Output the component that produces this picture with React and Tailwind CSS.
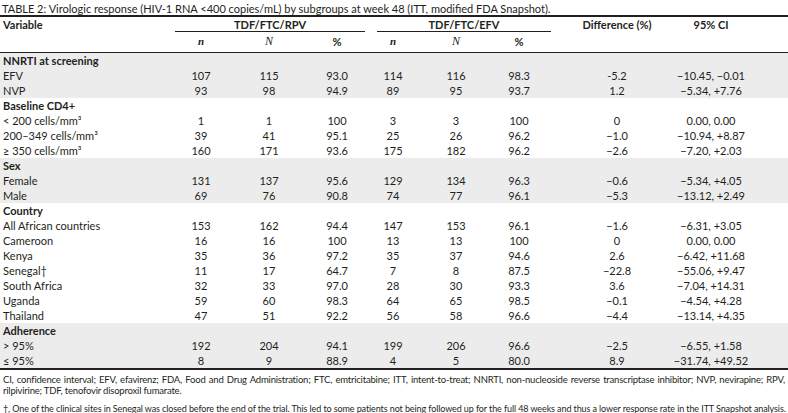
const cols = 'grid grid-cols-[168px_66px_70px_66px_46px_80px_46px_150px_38px_1fr]';

const groups = [
  {
    title: 'NNRTI at screening',
    shade: true,
    rows: [
      ['EFV', '107', '115', '93.0', '114', '116', '98.3', '-5.2', '−10.45, −0.01'],
      ['NVP', '93', '98', '94.9', '89', '95', '93.7', '1.2', '−5.34, +7.76'],
    ],
  },
  {
    title: 'Baseline CD4+',
    shade: false,
    rows: [
      ['< 200 cells/mm³', '1', '1', '100', '3', '3', '100', '0', '0.00, 0.00'],
      ['200–349 cells/mm³', '39', '41', '95.1', '25', '26', '96.2', '−1.0', '−10.94, +8.87'],
      ['≥ 350 cells/mm³', '160', '171', '93.6', '175', '182', '96.2', '−2.6', '−7.20, +2.03'],
    ],
  },
  {
    title: 'Sex',
    shade: true,
    rows: [
      ['Female', '131', '137', '95.6', '129', '134', '96.3', '−0.6', '−5.34, +4.05'],
      ['Male', '69', '76', '90.8', '74', '77', '96.1', '−5.3', '−13.12, +2.49'],
    ],
  },
  {
    title: 'Country',
    shade: false,
    rows: [
      ['All African countries', '153', '162', '94.4', '147', '153', '96.1', '−1.6', '−6.31, +3.05'],
      ['Cameroon', '16', '16', '100', '13', '13', '100', '0', '0.00, 0.00'],
      ['Kenya', '35', '36', '97.2', '35', '37', '94.6', '2.6', '−6.42, +11.68'],
      ['Senegal†', '11', '17', '64.7', '7', '8', '87.5', '−22.8', '−55.06, +9.47'],
      ['South Africa', '32', '33', '97.0', '28', '30', '93.3', '3.6', '−7.04, +14.31'],
      ['Uganda', '59', '60', '98.3', '64', '65', '98.5', '−0.1', '−4.54, +4.28'],
      ['Thailand', '47', '51', '92.2', '56', '58', '96.6', '−4.4', '−13.14, +4.35'],
    ],
  },
  {
    title: 'Adherence',
    shade: true,
    rows: [
      ['> 95%', '192', '204', '94.1', '199', '206', '96.6', '−2.5', '−6.55, +1.58'],
      ['≤ 95%', '8', '9', '88.9', '4', '5', '80.0', '8.9', '−31.74, +49.52'],
    ],
  },
];

function Cell({ children }) {
  return <div className="flex justify-center whitespace-nowrap">{children}</div>;
}

export default function App() {
  return (
    <div className="h-[413px] w-[788px] overflow-hidden bg-white text-[11px] leading-[15px] text-[#231f20] [font-family:Lato,'Liberation_Sans',sans-serif]">
      <p className="h-[15px] pl-[2px] pt-[2px] text-[11px] leading-[13px] whitespace-nowrap">
        TABLE 2: Virologic response (HIV-1 RNA &lt;400 copies/mL) by subgroups at week 48 (ITT, modified FDA Snapshot).
      </p>
      <div className="border-t-2 border-[#231f20]">
        <div className={`${cols} h-[15px] items-center font-bold`}>
          <div className="pl-[3px]">Variable</div>
          <div className="col-span-3 ml-[7px] mr-[5px] flex h-[15px] justify-center border-b border-[#231f20]">TDF/FTC/RPV</div>
          <div className="col-span-3 ml-[7px] mr-[-9px] flex h-[15px] justify-center border-b border-[#231f20]">TDF/FTC/EFV</div>
          <Cell>Difference (%)</Cell>
          <Cell>95% CI</Cell>
        </div>
        <div className={`${cols} h-[21px] items-center border-b border-[#231f20] pb-[1px] font-bold`}>
          <div />
          <Cell><span className="italic [font-family:'Liberation_Serif',serif]">n</span></Cell>
          <Cell><span className="font-normal italic [font-family:'Liberation_Serif',serif] text-[12px]">N</span></Cell>
          <Cell>%</Cell>
          <Cell><span className="italic [font-family:'Liberation_Serif',serif]">n</span></Cell>
          <Cell><span className="font-normal italic [font-family:'Liberation_Serif',serif] text-[12px]">N</span></Cell>
          <Cell>%</Cell>
        </div>
        {groups.map((g) => (
          <div key={g.title} className={g.shade ? 'bg-[#ececec]' : 'bg-white'}>
            <div className="h-[15px] pl-[3px] font-bold">{g.title}</div>
            {g.rows.map((r) => (
              <div key={r[0]} className={`${cols} h-[15px] items-center`}>
                <div className="pl-[3px] whitespace-nowrap">{r[0]}</div>
                {r.slice(1).map((v, i) => (
                  <Cell key={i}>{v}</Cell>
                ))}
              </div>
            ))}
          </div>
        ))}
      </div>
      <div className="border-t-2 border-[#231f20] px-[3px] pt-[4px]">
        <p className="text-justify text-[9.5px] leading-[11px] tracking-[-0.2px]">
          CI, confidence interval; EFV, efavirenz; FDA, Food and Drug Administration; FTC, emtricitabine; ITT, intent-to-treat; NNRTI, non-nucleoside reverse transcriptase inhibitor; NVP, nevirapine; RPV, rilpivirine; TDF, tenofovir disoproxil fumarate.
        </p>
        <p className="mt-[7px] whitespace-nowrap text-[9px] leading-[11px] tracking-[-0.1px]">
          †, One of the clinical sites in Senegal was closed before the end of the trial. This led to some patients not being followed up for the full 48 weeks and thus a lower response rate in the ITT Snapshot analysis.
        </p>
      </div>
    </div>
  );
}
